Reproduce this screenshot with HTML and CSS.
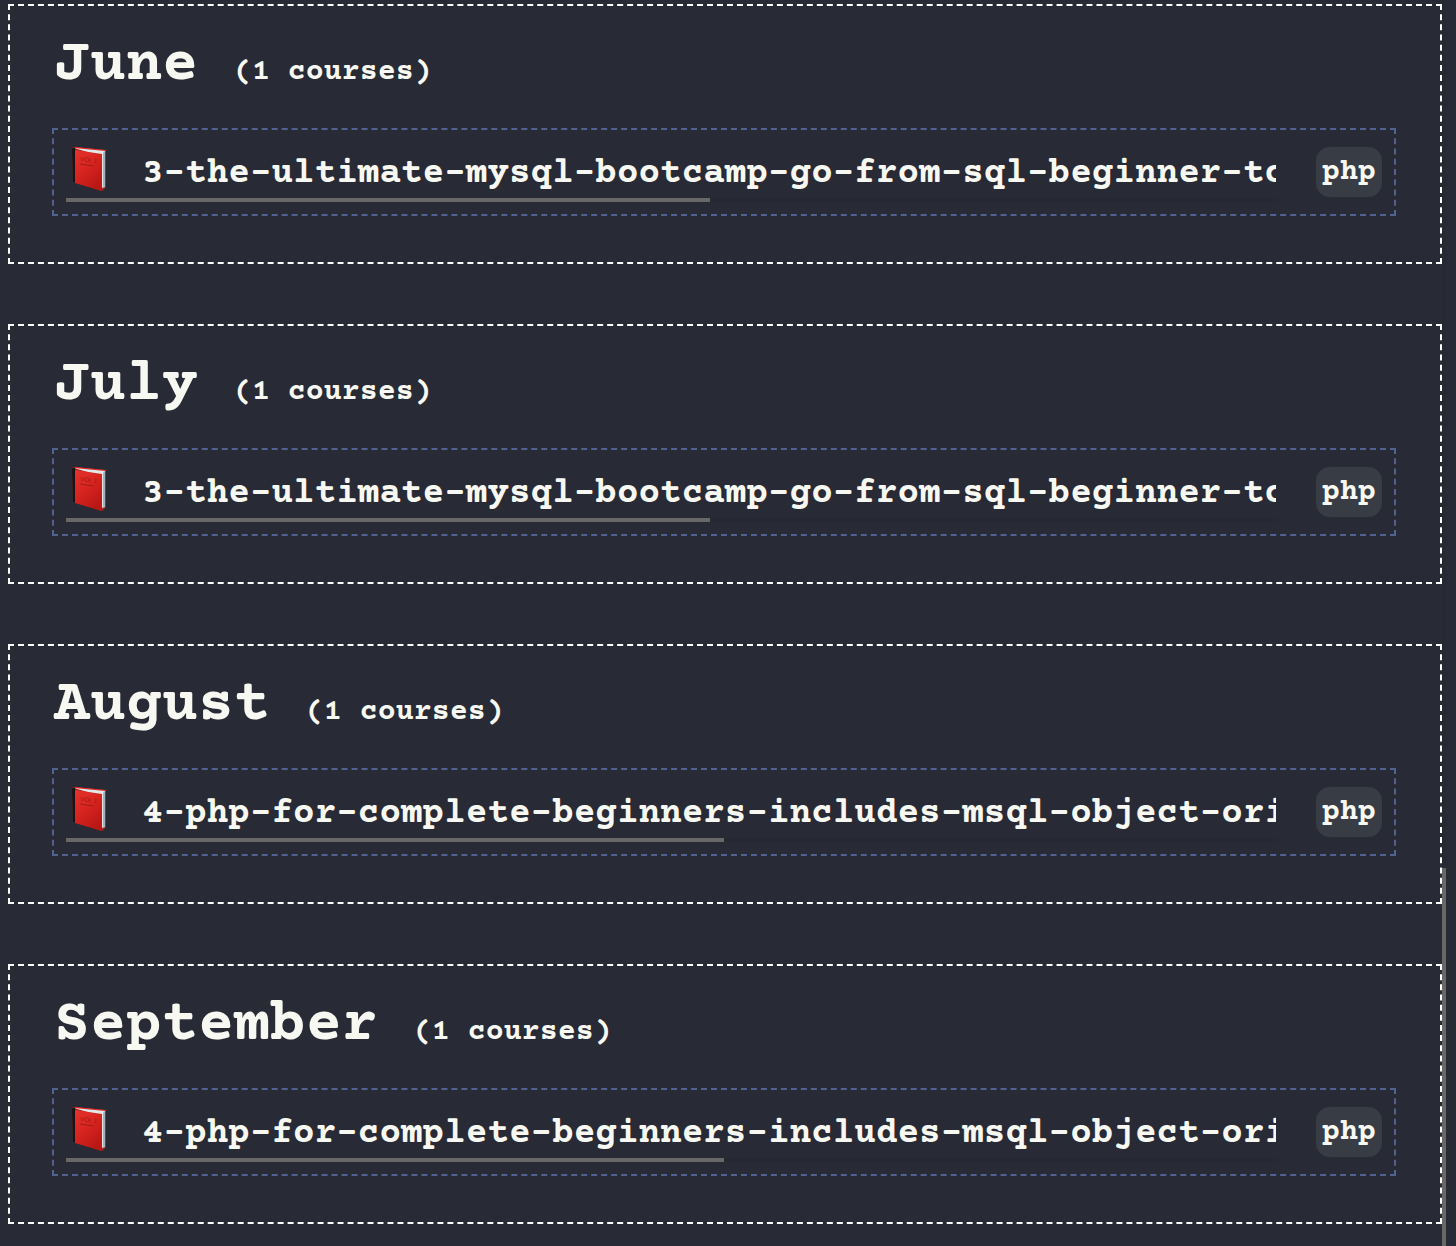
FILE: index.html
```html
<!DOCTYPE html>
<html lang="en">
<head>
<meta charset="utf-8">
<meta name="viewport" content="width=device-width, initial-scale=1">
<title>Courses by month</title>
<link rel="stylesheet" href="styles.css">
</head>
<body>
<svg class="symbols" aria-hidden="true">
  <defs>
    <linearGradient id="cover" x1="0" y1="0" x2="0.6" y2="1">
      <stop offset="0" stop-color="#e5342c"/>
      <stop offset="0.5" stop-color="#d8241f"/>
      <stop offset="1" stop-color="#b91817"/>
    </linearGradient>
  </defs>
  <symbol id="book" viewBox="0 0 36 46">
    <path d="M0 3 Q0 1 3 1 L34 4 V41 L30 45 L1 36Z" fill="#a82322"/>
    <path d="M3 1 L34 4 L33 6 L3 3Z" fill="#df3028"/>
    <path d="M2 2 L33 5 V41 L29 42 V10Z" fill="#dfe7ea"/>
    <path d="M31 7 L33 5 V41 L31 42Z" fill="#a3b3b8"/>
    <path d="M0 3 Q1 1 3 2 L4 5 V37 L1 36Z" fill="#151418"/>
    <path d="M3 4 L30 8 V45 L3 37Z" fill="url(#cover)"/>
    <path d="M8 18 L22 20" stroke="#a31c1b" stroke-width="1"/>
    <text x="8" y="15" transform="rotate(6 8 15)" class="volume">VOL 1</text>
  </symbol>
</svg>
<div class="page">
  <main class="months">
    <section class="month">
      <h2 class="month-title">June <span class="count">(1 courses)</span></h2>
      <article class="course">
        <div class="course-main">
          <div class="course-name"><svg class="book"><use href="#book"/></svg><span>3-the-ultimate-mysql-bootcamp-go-from-sql-beginner-to</span></div>
          <progress class="bar" value="53.2" max="100" aria-label="Course progress"></progress>
        </div>
        <span class="tag">php</span>
      </article>
    </section>
    <section class="month">
      <h2 class="month-title">July <span class="count">(1 courses)</span></h2>
      <article class="course">
        <div class="course-main">
          <div class="course-name"><svg class="book"><use href="#book"/></svg><span>3-the-ultimate-mysql-bootcamp-go-from-sql-beginner-to</span></div>
          <progress class="bar" value="53.2" max="100" aria-label="Course progress"></progress>
        </div>
        <span class="tag">php</span>
      </article>
    </section>
    <section class="month">
      <h2 class="month-title">August <span class="count">(1 courses)</span></h2>
      <article class="course">
        <div class="course-main">
          <div class="course-name"><svg class="book"><use href="#book"/></svg><span>4-php-for-complete-beginners-includes-msql-object-ori</span></div>
          <progress class="bar" value="54.4" max="100" aria-label="Course progress"></progress>
        </div>
        <span class="tag">php</span>
      </article>
    </section>
    <section class="month">
      <h2 class="month-title">September <span class="count">(1 courses)</span></h2>
      <article class="course">
        <div class="course-main">
          <div class="course-name"><svg class="book"><use href="#book"/></svg><span>4-php-for-complete-beginners-includes-msql-object-ori</span></div>
          <progress class="bar" value="54.4" max="100" aria-label="Course progress"></progress>
        </div>
        <span class="tag">php</span>
      </article>
    </section>
  </main>
  <div class="scroll-track"><div class="scroll-thumb"></div></div>
</div>
</body>
</html>
```
FILE: styles.css
```css
* { box-sizing: border-box; }

body {
  margin: 0;
  background: #282a35;
  color: #f8f8f2;
  font-family: "Courier Prime", "Nimbus Mono PS", "Liberation Mono", monospace;
  font-weight: 700;
}

.symbols {
  position: absolute;
  width: 0;
  height: 0;
}

.volume {
  font: 6px "Liberation Sans", sans-serif;
  fill: #941a1a;
}

.page {
  display: flex;
  min-height: 100vh;
  padding-right: 10px;
}

.months {
  flex: 1;
  min-width: 0;
  display: flex;
  flex-direction: column;
  gap: 60px;
  padding: 4px 0 22px 8px;
}

.month {
  border: 2px dashed #fff;
  padding: 24px 44px 46px 42px;
}

.month-title {
  display: flex;
  align-items: baseline;
  gap: 36px;
  margin: 0 0 26px;
  padding-left: 2px;
  font-size: 60px;
  line-height: 72px;
}

.count {
  font-size: 30px;
  line-height: 36px;
}

.course {
  display: flex;
  align-items: center;
  gap: 40px;
  border: 2px dashed #506192;
  padding: 12px;
}

.course-main {
  flex: 1;
  min-width: 0;
}

.course-name {
  display: flex;
  gap: 34px;
  height: 56px;
  padding: 4px 0 0 6px;
  overflow: hidden;
  white-space: nowrap;
  font-size: 36px;
  line-height: 56px;
}

.book {
  flex: none;
  width: 36px;
  height: 46px;
}

.bar {
  display: block;
  appearance: none;
  width: 100%;
  height: 4px;
  border: 0;
  background: #262833;
}

.bar::-webkit-progress-bar { background: #262833; }
.bar::-webkit-progress-value { background: #686866; }

.tag {
  padding: 2px 6px 0;
  border-radius: 14px;
  background: #383c45;
  font-size: 30px;
  line-height: 48px;
}

.scroll-track {
  display: flex;
  align-items: flex-end;
  width: 4px;
  background: #262833;
}

.scroll-thumb {
  width: 100%;
  height: 30.3%;
  background: #686866;
}
```
